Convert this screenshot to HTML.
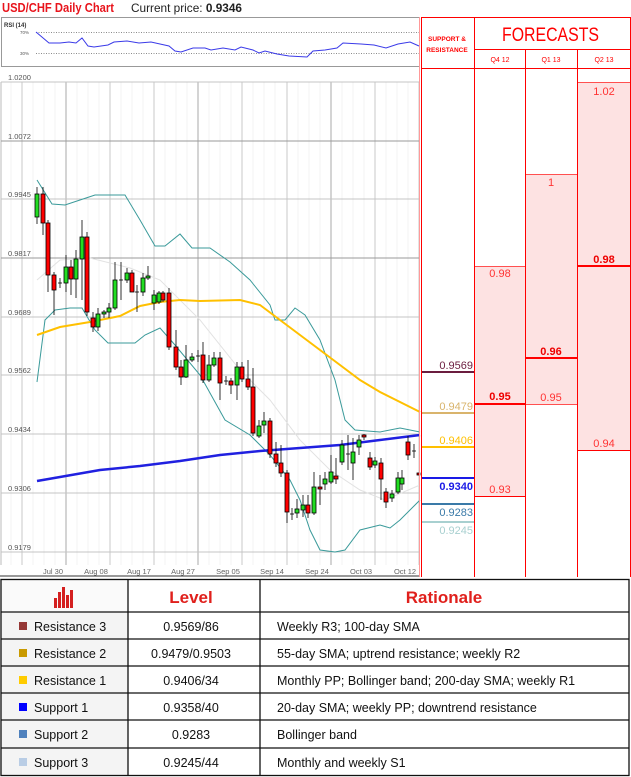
<!DOCTYPE html>
<html><head><meta charset="utf-8"><style>
html,body{margin:0;padding:0;background:#fff;}
svg{display:block;}
text{font-family:"Liberation Sans",sans-serif;}
</style></head><body>
<svg width="631" height="777" viewBox="0 0 631 777" xmlns="http://www.w3.org/2000/svg">
<rect width="631" height="777" fill="#fff"/>
<!-- title -->
<text x="2" y="12" font-size="12.5" font-weight="bold" fill="#e8141c" textLength="112" lengthAdjust="spacingAndGlyphs">USD/CHF Daily Chart</text>
<text x="131" y="12" font-size="12" fill="#222" textLength="111" lengthAdjust="spacingAndGlyphs">Current price: <tspan font-weight="bold">0.9346</tspan></text>
<!-- RSI box -->
<rect x="1.5" y="17.5" width="418" height="49" fill="#fff" stroke="#999"/>
<text x="4" y="27" font-size="6" font-weight="bold" fill="#333">RSI (14)</text>
<text x="20" y="34" font-size="4.5" fill="#555">70%</text>
<text x="20" y="55" font-size="4.5" fill="#555">30%</text>
<line x1="36" y1="32.5" x2="419" y2="32.5" stroke="#666" stroke-dasharray="1,1.5" stroke-width="0.7"/>
<line x1="36" y1="53.5" x2="419" y2="53.5" stroke="#666" stroke-dasharray="1,1.5" stroke-width="0.7"/>
<polyline fill="none" stroke="#3a3ae8" stroke-width="1" points="36,32 49,43 60,43 69,42 76,43 82,38 88,46 94,47 108,45 114,42 127,41 139,43 151,42 160,44 169,46 175,51 181,52 193,48 205,48 211,50 223,48 235,50 241,47 253,50 259,53 265,51 277,54 289,56 307,57 313,51 325,50 337,48 343,43 361,44 374,45 386,48 398,44 410,42 419,46"/>
<!-- chart -->
<g>
<line x1="1" y1="82" x2="1" y2="565" stroke="#bbb"/>
<g stroke="#f0f0f0" stroke-width="0.8">
<line x1="11" y1="82" x2="11" y2="565"/><line x1="33" y1="82" x2="33" y2="565"/><line x1="44" y1="82" x2="44" y2="565"/><line x1="55" y1="82" x2="55" y2="565"/><line x1="77" y1="82" x2="77" y2="565"/><line x1="88" y1="82" x2="88" y2="565"/><line x1="99" y1="82" x2="99" y2="565"/><line x1="121" y1="82" x2="121" y2="565"/><line x1="132" y1="82" x2="132" y2="565"/><line x1="143" y1="82" x2="143" y2="565"/><line x1="165" y1="82" x2="165" y2="565"/><line x1="176" y1="82" x2="176" y2="565"/><line x1="187" y1="82" x2="187" y2="565"/><line x1="209" y1="82" x2="209" y2="565"/><line x1="220" y1="82" x2="220" y2="565"/><line x1="231" y1="82" x2="231" y2="565"/><line x1="253" y1="82" x2="253" y2="565"/><line x1="264" y1="82" x2="264" y2="565"/><line x1="275" y1="82" x2="275" y2="565"/><line x1="298" y1="82" x2="298" y2="565"/><line x1="309" y1="82" x2="309" y2="565"/><line x1="320" y1="82" x2="320" y2="565"/><line x1="342" y1="82" x2="342" y2="565"/><line x1="353" y1="82" x2="353" y2="565"/><line x1="364" y1="82" x2="364" y2="565"/><line x1="386" y1="82" x2="386" y2="565"/><line x1="397" y1="82" x2="397" y2="565"/><line x1="408" y1="82" x2="408" y2="565"/>
</g>
<g stroke="#c8c8c8" stroke-width="1">
<line x1="22" y1="82" x2="22" y2="565"/><line x1="66" y1="82" x2="66" y2="565" stroke="#aaa"/><line x1="110" y1="82" x2="110" y2="565"/><line x1="154" y1="82" x2="154" y2="565"/><line x1="198" y1="82" x2="198" y2="565" stroke="#aaa"/><line x1="242" y1="82" x2="242" y2="565"/><line x1="287" y1="82" x2="287" y2="565"/><line x1="331" y1="82" x2="331" y2="565" stroke="#aaa"/><line x1="375" y1="82" x2="375" y2="565"/><line x1="419" y1="82" x2="419" y2="565"/>
</g>
<g stroke="#c4c4c4" stroke-width="1">
<line x1="1" y1="82" x2="420" y2="82"/><line x1="1" y1="141" x2="420" y2="141" stroke="#999"/><line x1="1" y1="199" x2="420" y2="199"/><line x1="1" y1="258" x2="420" y2="258" stroke="#999"/><line x1="1" y1="317" x2="420" y2="317"/><line x1="1" y1="375" x2="420" y2="375"/><line x1="1" y1="434" x2="420" y2="434"/><line x1="1" y1="493" x2="420" y2="493"/><line x1="1" y1="552" x2="420" y2="552"/>
</g>
<g font-size="7.5" fill="#555">
<text x="8" y="80">1.0200</text><text x="8" y="139">1.0072</text><text x="8" y="197">0.9945</text><text x="8" y="256">0.9817</text><text x="8" y="315">0.9689</text><text x="8" y="373">0.9562</text><text x="8" y="432">0.9434</text><text x="8" y="491">0.9306</text><text x="8" y="550">0.9179</text>
</g>
<line x1="0" y1="576" x2="420" y2="576" stroke="#333"/>
<g font-size="7.5" fill="#666" text-anchor="middle">
<text x="53" y="574">Jul 30</text><text x="96" y="574">Aug 08</text><text x="139" y="574">Aug 17</text><text x="183" y="574">Aug 27</text><text x="228" y="574">Sep 05</text><text x="272" y="574">Sep 14</text><text x="317" y="574">Sep 24</text><text x="361" y="574">Oct 03</text><text x="405" y="574">Oct 12</text>
</g>
<polyline fill="none" stroke="#e2e2e2" stroke-width="1" points="37,280 60,260 90,258 130,268 160,280 200,320 240,370 270,400 300,440 330,470 360,490 385,500 420,485"/>
<polyline fill="none" stroke="#3a9a9a" stroke-width="1" points="37,180 52,204 65,205 80,200 95,195 125,195 140,220 155,246 165,246 180,234 192,248 210,248 230,262 250,280 270,305 275,320 285,320 295,308 305,315 320,340 335,380 345,420 355,430 380,432 400,428 420,432"/>
<polyline fill="none" stroke="#3a9a9a" stroke-width="1" points="37,382 45,320 55,310 70,308 82,308 95,330 108,343 135,343 145,335 160,328 175,345 200,375 225,420 250,435 270,455 290,480 300,500 310,530 320,550 335,552 345,550 360,530 380,525 390,528 400,520 415,505 420,500"/>
<polyline fill="none" stroke="#ffc000" stroke-width="2" points="37,335 60,327 90,322 120,316 140,306 160,302 180,300 200,301 240,300 260,305 280,320 300,335 320,350 340,365 360,380 380,392 400,402 420,412"/>
<polyline fill="none" stroke="#2020e0" stroke-width="2.5" points="37,481 60,477 100,470 140,466 180,461 220,455 260,451 300,448 340,445 380,440 420,435"/>
<g stroke="#000" stroke-width="0.8">
<line x1="37" y1="187" x2="37" y2="224"/><rect x="35" y="194" width="4" height="23" fill="#22dd22"/>
<line x1="43" y1="187" x2="43" y2="235"/><rect x="41" y="194" width="4" height="29" fill="#f00"/>
<line x1="48" y1="220" x2="48" y2="292"/><rect x="46" y="223" width="4" height="52" fill="#f00"/>
<line x1="54" y1="272" x2="54" y2="315"/><rect x="52" y="275" width="4" height="15" fill="#f00"/>
<line x1="60" y1="278" x2="60" y2="288"/><line x1="58" y1="283" x2="62" y2="283"/>
<line x1="66" y1="255" x2="66" y2="292"/><rect x="64" y="267" width="4" height="16" fill="#22dd22"/>
<line x1="71" y1="260" x2="71" y2="295"/><rect x="69" y="267" width="4" height="12" fill="#f00"/>
<line x1="76" y1="250" x2="76" y2="298"/><rect x="74" y="259" width="4" height="20" fill="#22dd22"/>
<line x1="82" y1="220" x2="82" y2="300"/><rect x="80" y="237" width="4" height="22" fill="#22dd22"/>
<line x1="87" y1="232" x2="87" y2="316"/><rect x="85" y="237" width="4" height="75" fill="#f00"/>
<line x1="93" y1="312" x2="93" y2="332"/><rect x="91" y="318" width="4" height="9" fill="#f00"/>
<line x1="98" y1="308" x2="98" y2="331"/><rect x="96" y="314" width="4" height="13" fill="#22dd22"/>
<line x1="104" y1="310" x2="104" y2="318"/><rect x="102" y="312" width="4" height="2" fill="#22dd22"/>
<line x1="109" y1="303" x2="109" y2="318"/><rect x="107" y="308" width="4" height="4" fill="#22dd22"/>
<line x1="115" y1="262" x2="115" y2="310"/><rect x="113" y="280" width="4" height="28" fill="#22dd22"/>
<line x1="121" y1="262" x2="121" y2="300"/><line x1="119" y1="280" x2="123" y2="280"/>
<line x1="127" y1="268" x2="127" y2="283"/><rect x="125" y="273" width="4" height="7" fill="#22dd22"/>
<line x1="132" y1="270" x2="132" y2="292"/><rect x="130" y="273" width="4" height="19" fill="#f00"/>
<line x1="137" y1="285" x2="137" y2="312"/><line x1="135" y1="292" x2="139" y2="292"/>
<line x1="143" y1="273" x2="143" y2="296"/><rect x="141" y="278" width="4" height="14" fill="#22dd22"/>
<line x1="148" y1="266" x2="148" y2="280"/><rect x="146" y="276" width="4" height="2" fill="#22dd22"/>
<line x1="154" y1="290" x2="154" y2="310"/><rect x="152" y="295" width="4" height="8" fill="#22dd22"/>
<line x1="159" y1="291" x2="159" y2="304"/><rect x="157" y="293" width="4" height="9" fill="#22dd22"/>
<line x1="163" y1="291" x2="163" y2="302"/><rect x="161" y="293" width="4" height="7" fill="#f00"/>
<line x1="169" y1="288" x2="169" y2="350"/><rect x="167" y="293" width="4" height="54" fill="#f00"/>
<line x1="176" y1="330" x2="176" y2="370"/><rect x="174" y="347" width="4" height="20" fill="#f00"/>
<line x1="181" y1="360" x2="181" y2="385"/><rect x="179" y="367" width="4" height="10" fill="#f00"/>
<line x1="186" y1="345" x2="186" y2="378"/><rect x="184" y="360" width="4" height="17" fill="#22dd22"/>
<line x1="192" y1="353" x2="192" y2="362"/><rect x="190" y="357" width="4" height="3" fill="#22dd22"/>
<line x1="198" y1="350" x2="198" y2="362"/><line x1="196" y1="356" x2="200" y2="356"/>
<line x1="203" y1="342" x2="203" y2="383"/><rect x="201" y="355" width="4" height="25" fill="#f00"/>
<line x1="209" y1="355" x2="209" y2="382"/><rect x="207" y="365" width="4" height="15" fill="#22dd22"/>
<line x1="214" y1="352" x2="214" y2="367"/><rect x="212" y="358" width="4" height="7" fill="#22dd22"/>
<line x1="220" y1="352" x2="220" y2="400"/><rect x="218" y="358" width="4" height="25" fill="#f00"/>
<line x1="226" y1="376" x2="226" y2="385"/><line x1="224" y1="381" x2="228" y2="381"/>
<line x1="231" y1="378" x2="231" y2="394"/><rect x="229" y="381" width="4" height="4" fill="#f00"/>
<line x1="237" y1="362" x2="237" y2="400"/><rect x="235" y="367" width="4" height="18" fill="#22dd22"/>
<line x1="242" y1="362" x2="242" y2="382"/><rect x="240" y="367" width="4" height="12" fill="#f00"/>
<line x1="248" y1="360" x2="248" y2="390"/><rect x="246" y="379" width="4" height="8" fill="#f00"/>
<line x1="253" y1="368" x2="253" y2="436"/><rect x="251" y="387" width="4" height="46" fill="#f00"/>
<line x1="259" y1="420" x2="259" y2="438"/><rect x="257" y="426" width="4" height="10" fill="#22dd22"/>
<line x1="264" y1="412" x2="264" y2="433"/><rect x="262" y="421" width="4" height="4" fill="#22dd22"/>
<line x1="270" y1="418" x2="270" y2="458"/><rect x="268" y="421" width="4" height="33" fill="#f00"/>
<line x1="276" y1="442" x2="276" y2="467"/><rect x="274" y="454" width="4" height="9" fill="#f00"/>
<line x1="281" y1="445" x2="281" y2="477"/><rect x="279" y="463" width="4" height="10" fill="#f00"/>
<line x1="287" y1="470" x2="287" y2="523"/><rect x="285" y="473" width="4" height="39" fill="#f00"/>
<line x1="292" y1="508" x2="292" y2="520"/><line x1="290" y1="514" x2="294" y2="514"/>
<line x1="297" y1="499" x2="297" y2="518"/><rect x="295" y="509" width="4" height="4" fill="#22dd22"/>
<line x1="303" y1="495" x2="303" y2="517"/><rect x="301" y="505" width="4" height="5" fill="#22dd22"/>
<line x1="308" y1="495" x2="308" y2="518"/><rect x="306" y="505" width="4" height="8" fill="#f00"/>
<line x1="314" y1="472" x2="314" y2="515"/><rect x="312" y="487" width="4" height="26" fill="#22dd22"/>
<line x1="320" y1="475" x2="320" y2="505"/><rect x="318" y="487" width="4" height="2" fill="#f00"/>
<line x1="325" y1="472" x2="325" y2="490"/><rect x="323" y="479" width="4" height="5" fill="#22dd22"/>
<line x1="331" y1="455" x2="331" y2="484"/><rect x="329" y="472" width="4" height="10" fill="#22dd22"/>
<line x1="336" y1="458" x2="336" y2="484"/><rect x="334" y="476" width="4" height="3" fill="#f00"/>
<line x1="342" y1="440" x2="342" y2="465"/><rect x="340" y="445" width="4" height="17" fill="#22dd22"/>
<line x1="348" y1="435" x2="348" y2="470"/><line x1="346" y1="454" x2="350" y2="454"/>
<line x1="353" y1="438" x2="353" y2="480"/><rect x="351" y="452" width="4" height="11" fill="#22dd22"/>
<line x1="359" y1="435" x2="359" y2="455"/><rect x="357" y="440" width="4" height="7" fill="#22dd22"/>
<line x1="364" y1="434" x2="364" y2="440"/><rect x="362" y="435" width="4" height="2" fill="#f00"/>
<line x1="370" y1="452" x2="370" y2="470"/><rect x="368" y="458" width="4" height="9" fill="#f00"/>
<line x1="375" y1="457" x2="375" y2="468"/><rect x="373" y="461" width="4" height="4" fill="#22dd22"/>
<line x1="381" y1="458" x2="381" y2="500"/><rect x="379" y="463" width="4" height="16" fill="#f00"/>
<line x1="386" y1="488" x2="386" y2="508"/><rect x="384" y="492" width="4" height="10" fill="#f00"/>
<line x1="392" y1="490" x2="392" y2="502"/><rect x="390" y="494" width="4" height="4" fill="#22dd22"/>
<line x1="398" y1="472" x2="398" y2="494"/><rect x="396" y="478" width="4" height="14" fill="#22dd22"/>
<line x1="402" y1="470" x2="402" y2="490"/><rect x="400" y="478" width="4" height="6" fill="#22dd22"/>
<line x1="408" y1="436" x2="408" y2="460"/><rect x="406" y="442" width="4" height="13" fill="#f00"/>
<line x1="414" y1="444" x2="414" y2="458"/><line x1="412" y1="451" x2="416" y2="451"/>
<rect x="417" y="473" width="3" height="2" fill="#f00"/>
</g>
</g>
<!-- right panel -->
<rect x="474" y="266" width="51" height="230" fill="#fde2e2"/>
<rect x="525" y="174" width="52" height="230" fill="#fde2e2"/>
<rect x="577" y="82" width="54" height="368" fill="#fde2e2"/>
<g stroke="#ff5050" stroke-width="1">
<line x1="474" y1="266.5" x2="525" y2="266.5"/><line x1="474" y1="496.5" x2="525" y2="496.5" stroke="#f00"/>
<line x1="525" y1="174.5" x2="577" y2="174.5"/><line x1="525" y1="404.5" x2="577" y2="404.5"/>
<line x1="577" y1="82.5" x2="631" y2="82.5"/><line x1="577" y1="450.5" x2="631" y2="450.5" stroke="#f00"/>
</g>
<g stroke="#f00" stroke-width="2">
<line x1="474" y1="404" x2="525" y2="404"/><line x1="525" y1="358" x2="577" y2="358"/><line x1="577" y1="266" x2="631" y2="266"/>
</g>
<g stroke="#f00" stroke-width="1">
<line x1="421.5" y1="17" x2="421.5" y2="577"/><line x1="474.5" y1="17" x2="474.5" y2="577"/><line x1="525.5" y1="49" x2="525.5" y2="577"/><line x1="577.5" y1="49" x2="577.5" y2="577"/><line x1="630.5" y1="17" x2="630.5" y2="577"/>
<line x1="421" y1="17.5" x2="631" y2="17.5"/><line x1="474" y1="49.5" x2="631" y2="49.5"/><line x1="421" y1="68.5" x2="631" y2="68.5"/>
</g>
<line x1="419.5" y1="17" x2="419.5" y2="577" stroke="#f99" stroke-width="1"/>
<text x="447" y="41" font-size="6.5" font-weight="bold" fill="#f00" text-anchor="middle">SUPPORT &amp;</text>
<text x="447" y="52" font-size="6.5" font-weight="bold" fill="#f00" text-anchor="middle">RESISTANCE</text>
<text x="502" y="41" font-size="19" fill="#f00" textLength="97" lengthAdjust="spacingAndGlyphs">FORECASTS</text>
<g font-size="7" fill="#f00" text-anchor="middle"><text x="500" y="62">Q4 12</text><text x="551" y="62">Q1 13</text><text x="604" y="62">Q2 13</text></g>
<g font-size="11" fill="#f33" text-anchor="middle">
<text x="500" y="277">0.98</text><text x="500" y="493">0.93</text>
<text x="551" y="186">1</text><text x="551" y="401">0.95</text>
<text x="604" y="95">1.02</text><text x="604" y="447">0.94</text>
</g>
<g font-size="11" font-weight="bold" fill="#e00" text-anchor="middle">
<text x="500" y="400">0.95</text><text x="551" y="355">0.96</text><text x="604" y="263">0.98</text>
</g>
<g stroke-width="2">
<line x1="422" y1="372" x2="474" y2="372" stroke="#6b1d3f"/>
<line x1="422" y1="413" x2="474" y2="413" stroke="#d9b46c"/>
<line x1="422" y1="447" x2="474" y2="447" stroke="#ffc000"/>
<line x1="422" y1="478" x2="474" y2="478" stroke="#1a1ae6"/>
<line x1="422" y1="504" x2="474" y2="504" stroke="#3a7aa8"/>
<line x1="422" y1="522" x2="474" y2="522" stroke="#a8d0d0"/>
</g>
<g font-size="11" text-anchor="end">
<text x="473" y="369" fill="#6b1d3f">0.9569</text>
<text x="473" y="410" fill="#d9b46c">0.9479</text>
<text x="473" y="444" fill="#ffc000">0.9406</text>
<text x="473" y="490" fill="#1a1ae6" font-weight="bold">0.9340</text>
<text x="473" y="516" fill="#3a7aa8">0.9283</text>
<text x="473" y="534" fill="#a8d0d0">0.9245</text>
</g>
<!-- table -->
<rect x="0" y="578" width="128" height="197" fill="#f4f4f4"/>
<rect x="0" y="578" width="128" height="34" fill="#fafafa"/>
<g stroke="#111" stroke-width="1.3">
<rect x="1" y="579.5" width="628" height="196" fill="none"/>
<line x1="128" y1="579" x2="128" y2="776"/><line x1="260" y1="579" x2="260" y2="776"/>
<line x1="1" y1="612" x2="629" y2="612"/><line x1="1" y1="639" x2="629" y2="639"/><line x1="1" y1="666" x2="629" y2="666"/><line x1="1" y1="693" x2="629" y2="693"/><line x1="1" y1="720" x2="629" y2="720"/><line x1="1" y1="748" x2="629" y2="748"/>
</g>
<g fill="#d42020">
<rect x="54" y="598" width="3" height="10"/><rect x="58" y="592" width="3" height="16"/><rect x="62" y="587" width="3" height="21"/><rect x="66" y="595" width="3" height="13"/><rect x="70" y="590" width="3" height="18"/>
</g>
<text x="191" y="603" font-size="17" font-weight="bold" fill="#e0201c" text-anchor="middle">Level</text>
<text x="444" y="603" font-size="17" font-weight="bold" fill="#e0201c" text-anchor="middle">Rationale</text>
<rect x="19" y="622" width="8" height="8" fill="#953735"/>
<rect x="19" y="649" width="8" height="8" fill="#c99a00"/>
<rect x="19" y="676" width="8" height="8" fill="#ffcc00"/>
<rect x="19" y="703" width="8" height="8" fill="#0000ff"/>
<rect x="19" y="730" width="8" height="8" fill="#4f81bd"/>
<rect x="19" y="758" width="8" height="8" fill="#b9cde5"/>
<g font-size="12.5" fill="#111">
<text x="34" y="631">Resistance 3</text><text x="34" y="658">Resistance 2</text><text x="34" y="685">Resistance 1</text><text x="34" y="712">Support 1</text><text x="34" y="739">Support 2</text><text x="34" y="767">Support 3</text>
<g text-anchor="middle"><text x="191" y="631">0.9569/86</text><text x="191" y="658">0.9479/0.9503</text><text x="191" y="685">0.9406/34</text><text x="191" y="712">0.9358/40</text><text x="191" y="739">0.9283</text><text x="191" y="767">0.9245/44</text></g>
<text x="277" y="631">Weekly R3; 100-day SMA</text><text x="277" y="658">55-day SMA; uptrend resistance; weekly R2</text><text x="277" y="685">Monthly PP; Bollinger band; 200-day SMA; weekly R1</text><text x="277" y="712">20-day SMA; weekly PP; downtrend resistance</text><text x="277" y="739">Bollinger band</text><text x="277" y="767">Monthly and weekly S1</text>
</g>
</svg>
</body></html>
